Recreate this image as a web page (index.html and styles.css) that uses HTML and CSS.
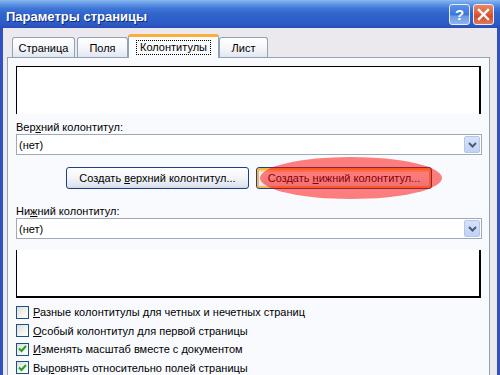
FILE: index.html
```html
<!DOCTYPE html>
<html lang="ru">
<head>
    <meta charset="UTF-8">
    <title>Параметры страницы</title>
    <link rel="stylesheet" href="styles.css">
</head>
<body>
    <div class="window">
        <div class="titlebar">
            <span class="title">Параметры страницы</span>
            <div class="title-buttons">
                <span class="tb-btn tb-help">?</span>
                <span class="tb-btn tb-close">
                    <svg width="13" height="13" viewBox="0 0 13 13"><path d="M2 2 L11 11 M11 2 L2 11" stroke="#fff" stroke-width="2.4" stroke-linecap="square"/></svg>
                </span>
            </div>
        </div>

        <div class="dialog">
            <div class="tabs">
                <div class="tab tab-page">Страница</div>
                <div class="tab tab-margins">Поля</div>
                <div class="tab tab-active"><span class="focus">Колонтитулы</span></div>
                <div class="tab tab-sheet">Лист</div>
            </div>

            <div class="panel">
                <div class="preview preview-header"></div>

                <div class="field-label">Вер<u>х</u>ний колонтитул:</div>
                <div class="select">
                    <span class="select-value">(нет)</span>
                    <span class="select-arrow">
                        <svg width="9" height="6" viewBox="0 0 9 6"><path d="M1 1 L4.5 4.5 L8 1" fill="none" stroke="#4d5a78" stroke-width="2"/></svg>
                    </span>
                </div>

                <div class="btn-row">
                    <button class="btn btn-header">Создать <u>в</u>ерхний колонтитул...</button>
                    <button class="btn btn-footer btn-hot">Создать <u>н</u>ижний колонтитул...</button>
                    <div class="highlight"></div>
                </div>

                <div class="field-label field-label-2">Ни<u>ж</u>ний колонтитул:</div>
                <div class="select">
                    <span class="select-value">(нет)</span>
                    <span class="select-arrow">
                        <svg width="9" height="6" viewBox="0 0 9 6"><path d="M1 1 L4.5 4.5 L8 1" fill="none" stroke="#4d5a78" stroke-width="2"/></svg>
                    </span>
                </div>

                <div class="preview preview-footer"></div>

                <div class="checks">
                    <div class="check"><span class="box"></span><span><u>Р</u>азные колонтитулы для четных и нечетных страниц</span></div>
                    <div class="check"><span class="box"></span><span><u>О</u>собый колонтитул для первой страницы</span></div>
                    <div class="check"><span class="box checked"><svg width="9" height="8" viewBox="0 0 9 8"><path d="M1 3.5 L3.5 6 L8 1" fill="none" stroke="#21a121" stroke-width="2"/></svg></span><span><u>И</u>зменять масштаб вместе с документом</span></div>
                    <div class="check"><span class="box checked"><svg width="9" height="8" viewBox="0 0 9 8"><path d="M1 3.5 L3.5 6 L8 1" fill="none" stroke="#21a121" stroke-width="2"/></svg></span><span>Вы<u>р</u>овнять относительно полей страницы</span></div>
                </div>
            </div>
        </div>
    </div>
</body>
</html>
```

FILE: styles.css
```css
body {
    margin: 0;
    width: 500px;
    height: 375px;
    overflow: hidden;
    font-family: 'Liberation Sans', Arial, sans-serif;
    font-size: 11px;
    color: #000;
    background: #ebe9ed;
}

.window {
    width: 500px;
    height: 375px;
    display: flex;
    flex-direction: column;
    box-sizing: border-box;
}

.titlebar {
    height: 28px;
    flex-shrink: 0;
    display: flex;
    align-items: center;
    justify-content: space-between;
    padding: 0 6px 0 6px;
    background: linear-gradient(to bottom, #8cb8f0 0, #74a8ea 2px, #5a90e2 5px, #3d73d6 9px, #3164cc 14px, #2e5dc7 22px, #2a52bd 27px, #2449b2 28px);
}

.title {
    color: #fff;
    font-weight: bold;
    font-size: 13px;
    text-shadow: 1px 1px 0 #102a80;
    margin-top: 4px;
}

.title-buttons {
    display: flex;
    gap: 3px;
    margin-top: 1px;
}

.tb-btn {
    width: 19px;
    height: 19px;
    border: 1px solid #e8eefa;
    border-radius: 3px;
    display: flex;
    align-items: center;
    justify-content: center;
    color: #fff;
    font-weight: bold;
    font-size: 15px;
}

.tb-help {
    background: linear-gradient(to bottom, #5d93ea 0, #3d76df 50%, #6a9ae6 60%, #8fb3ee 100%);
}

.tb-close {
    background: linear-gradient(to bottom, #e9875f 0, #df6442 40%, #d54a2b 60%, #e07a5a 100%);
}

.dialog {
    flex: 1;
    border-left: 3px solid #3250c0;
    border-right: 3px solid #3250c0;
    padding: 6px 7px 0 4px;
    display: flex;
    flex-direction: column;
}

.tabs {
    display: flex;
    align-items: flex-end;
    padding-left: 5px;
    height: 23px;
    position: relative;
    z-index: 1;
}

.tab {
    height: 20px;
    box-sizing: border-box;
    margin-right: 2px;
    border: 1px solid #91a3b8;
    border-bottom: none;
    border-radius: 3px 3px 0 0;
    background: linear-gradient(to bottom, #ffffff 0, #f6f7fa 50%, #e2e6ef 100%);
    display: flex;
    align-items: center;
    justify-content: center;
}

.tab-page {
    width: 63px;
}

.tab-margins {
    width: 51px;
    margin-right: 0;
}

.tab-active {
    width: 91px;
    height: 24px;
    margin-right: 0;
    margin-bottom: -1px;
    border-top: 3px solid #f9b03a;
    background: #fafbfd;
}

.tab-sheet {
    width: 49px;
}

.focus {
    border: 1px dotted #000;
    padding: 0 3px;
    line-height: 13px;
    margin-top: -1px;
}

.panel {
    flex: 1;
    border: 1px solid #91a3b8;
    border-bottom: none;
    background: #f9fafd;
    padding: 8px 7px 0 8px;
    display: flex;
    flex-direction: column;
}

.preview {
    height: 48px;
    box-sizing: border-box;
    background: #fff;
    border-left: 1px solid #000;
    border-right: 2px solid #000;
    margin-right: 1px;
}

.preview-header {
    border-top: 1px solid #000;
}

.preview-footer {
    border-bottom: 2px solid #000;
    margin-top: 11px;
}

.field-label {
    line-height: 13px;
    margin-top: 7px;
}

.field-label-2 {
    margin-top: 16px;
}

.select {
    height: 21px;
    box-sizing: border-box;
    border: 1px solid #a0a9b8;
    background: #fff;
    display: flex;
    align-items: center;
    justify-content: space-between;
    padding: 0 1px 0 2px;
}

.select-arrow {
    width: 16px;
    height: 17px;
    box-sizing: border-box;
    border: 1px solid #b6c6ea;
    border-radius: 2px;
    background: linear-gradient(to bottom, #d6e2fa 0, #c1d2f4 100%);
    display: flex;
    align-items: center;
    justify-content: center;
}

.btn-row {
    display: flex;
    justify-content: center;
    gap: 7px;
    margin-top: 12px;
    position: relative;
}

.btn {
    height: 22px;
    padding: 0;
    font-family: inherit;
    font-size: inherit;
    border: 1px solid #1f3f8a;
    border-radius: 3px;
    background: linear-gradient(to bottom, #ffffff 0, #f3f4f8 50%, #dfe4ee 90%, #cfd6e4 100%);
    color: #000;
}

.btn-header {
    width: 183px;
}

.btn-footer {
    width: 176px;
}

.btn-hot {
    box-shadow: inset 0 0 0 2px #f8b54a, inset 0 2px 0 2px #ffdc8c;
}

.highlight {
    position: absolute;
    left: 244px;
    top: -10px;
    width: 182px;
    height: 42px;
    border-radius: 50%;
    background: rgba(255, 0, 0, 0.5);
}

.checks {
    margin-top: 5px;
    display: flex;
    flex-direction: column;
}

.check {
    height: 18.5px;
    display: flex;
    align-items: center;
    gap: 4px;
}

.box {
    width: 13px;
    height: 13px;
    box-sizing: border-box;
    border: 1px solid #1c5180;
    background: linear-gradient(135deg, #dcdcd7 0, #f4f4f2 60%, #ffffff 100%);
    display: flex;
    align-items: center;
    justify-content: center;
}
```
